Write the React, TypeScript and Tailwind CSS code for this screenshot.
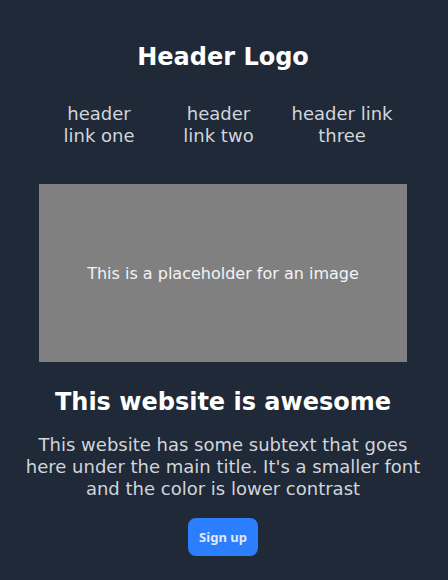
export default function App() {
  return (
    <div className="min-h-[580px] w-full bg-[#1f2937]" style={{ fontFamily: '"DejaVu Sans", sans-serif' }}>
      <div className="flex w-[446px] flex-col items-center">
        <header className="flex w-full flex-col items-center pt-[41px]">
          <h1 className="text-2xl leading-[32px] font-bold text-white">Header Logo</h1>
          <nav className="mt-[30px] flex w-full text-lg leading-[22px] text-gray-300">
            <a className="ml-[54px] w-[90px] text-center">header link one</a>
            <a className="ml-[29px] w-[91px] text-center">header link two</a>
            <a className="ml-[23px] w-[110px] text-center">header link three</a>
          </nav>
        </header>
        <div className="mt-[37px] flex h-[178px] w-[368px] items-center justify-center bg-[#808080] pt-[2px] text-base text-gray-100">
          This is a placeholder for an image
        </div>
        <h2 className="mt-[24px] text-2xl leading-[32px] font-bold text-white">This website is awesome</h2>
        <p className="mt-[16px] w-[400px] text-center text-lg leading-[22px] text-gray-300">
          This website has some subtext that goes here under the main title. It's a smaller font and the color is lower contrast
        </p>
        <button
          className="mt-[18px] flex h-[38px] w-[70px] items-center justify-center rounded-lg bg-blue-500 pt-[1px] text-[13px] font-bold text-gray-200"
          style={{ fontFamily: '"Noto Sans", sans-serif' }}
        >
          Sign up
        </button>
      </div>
    </div>
  );
}
